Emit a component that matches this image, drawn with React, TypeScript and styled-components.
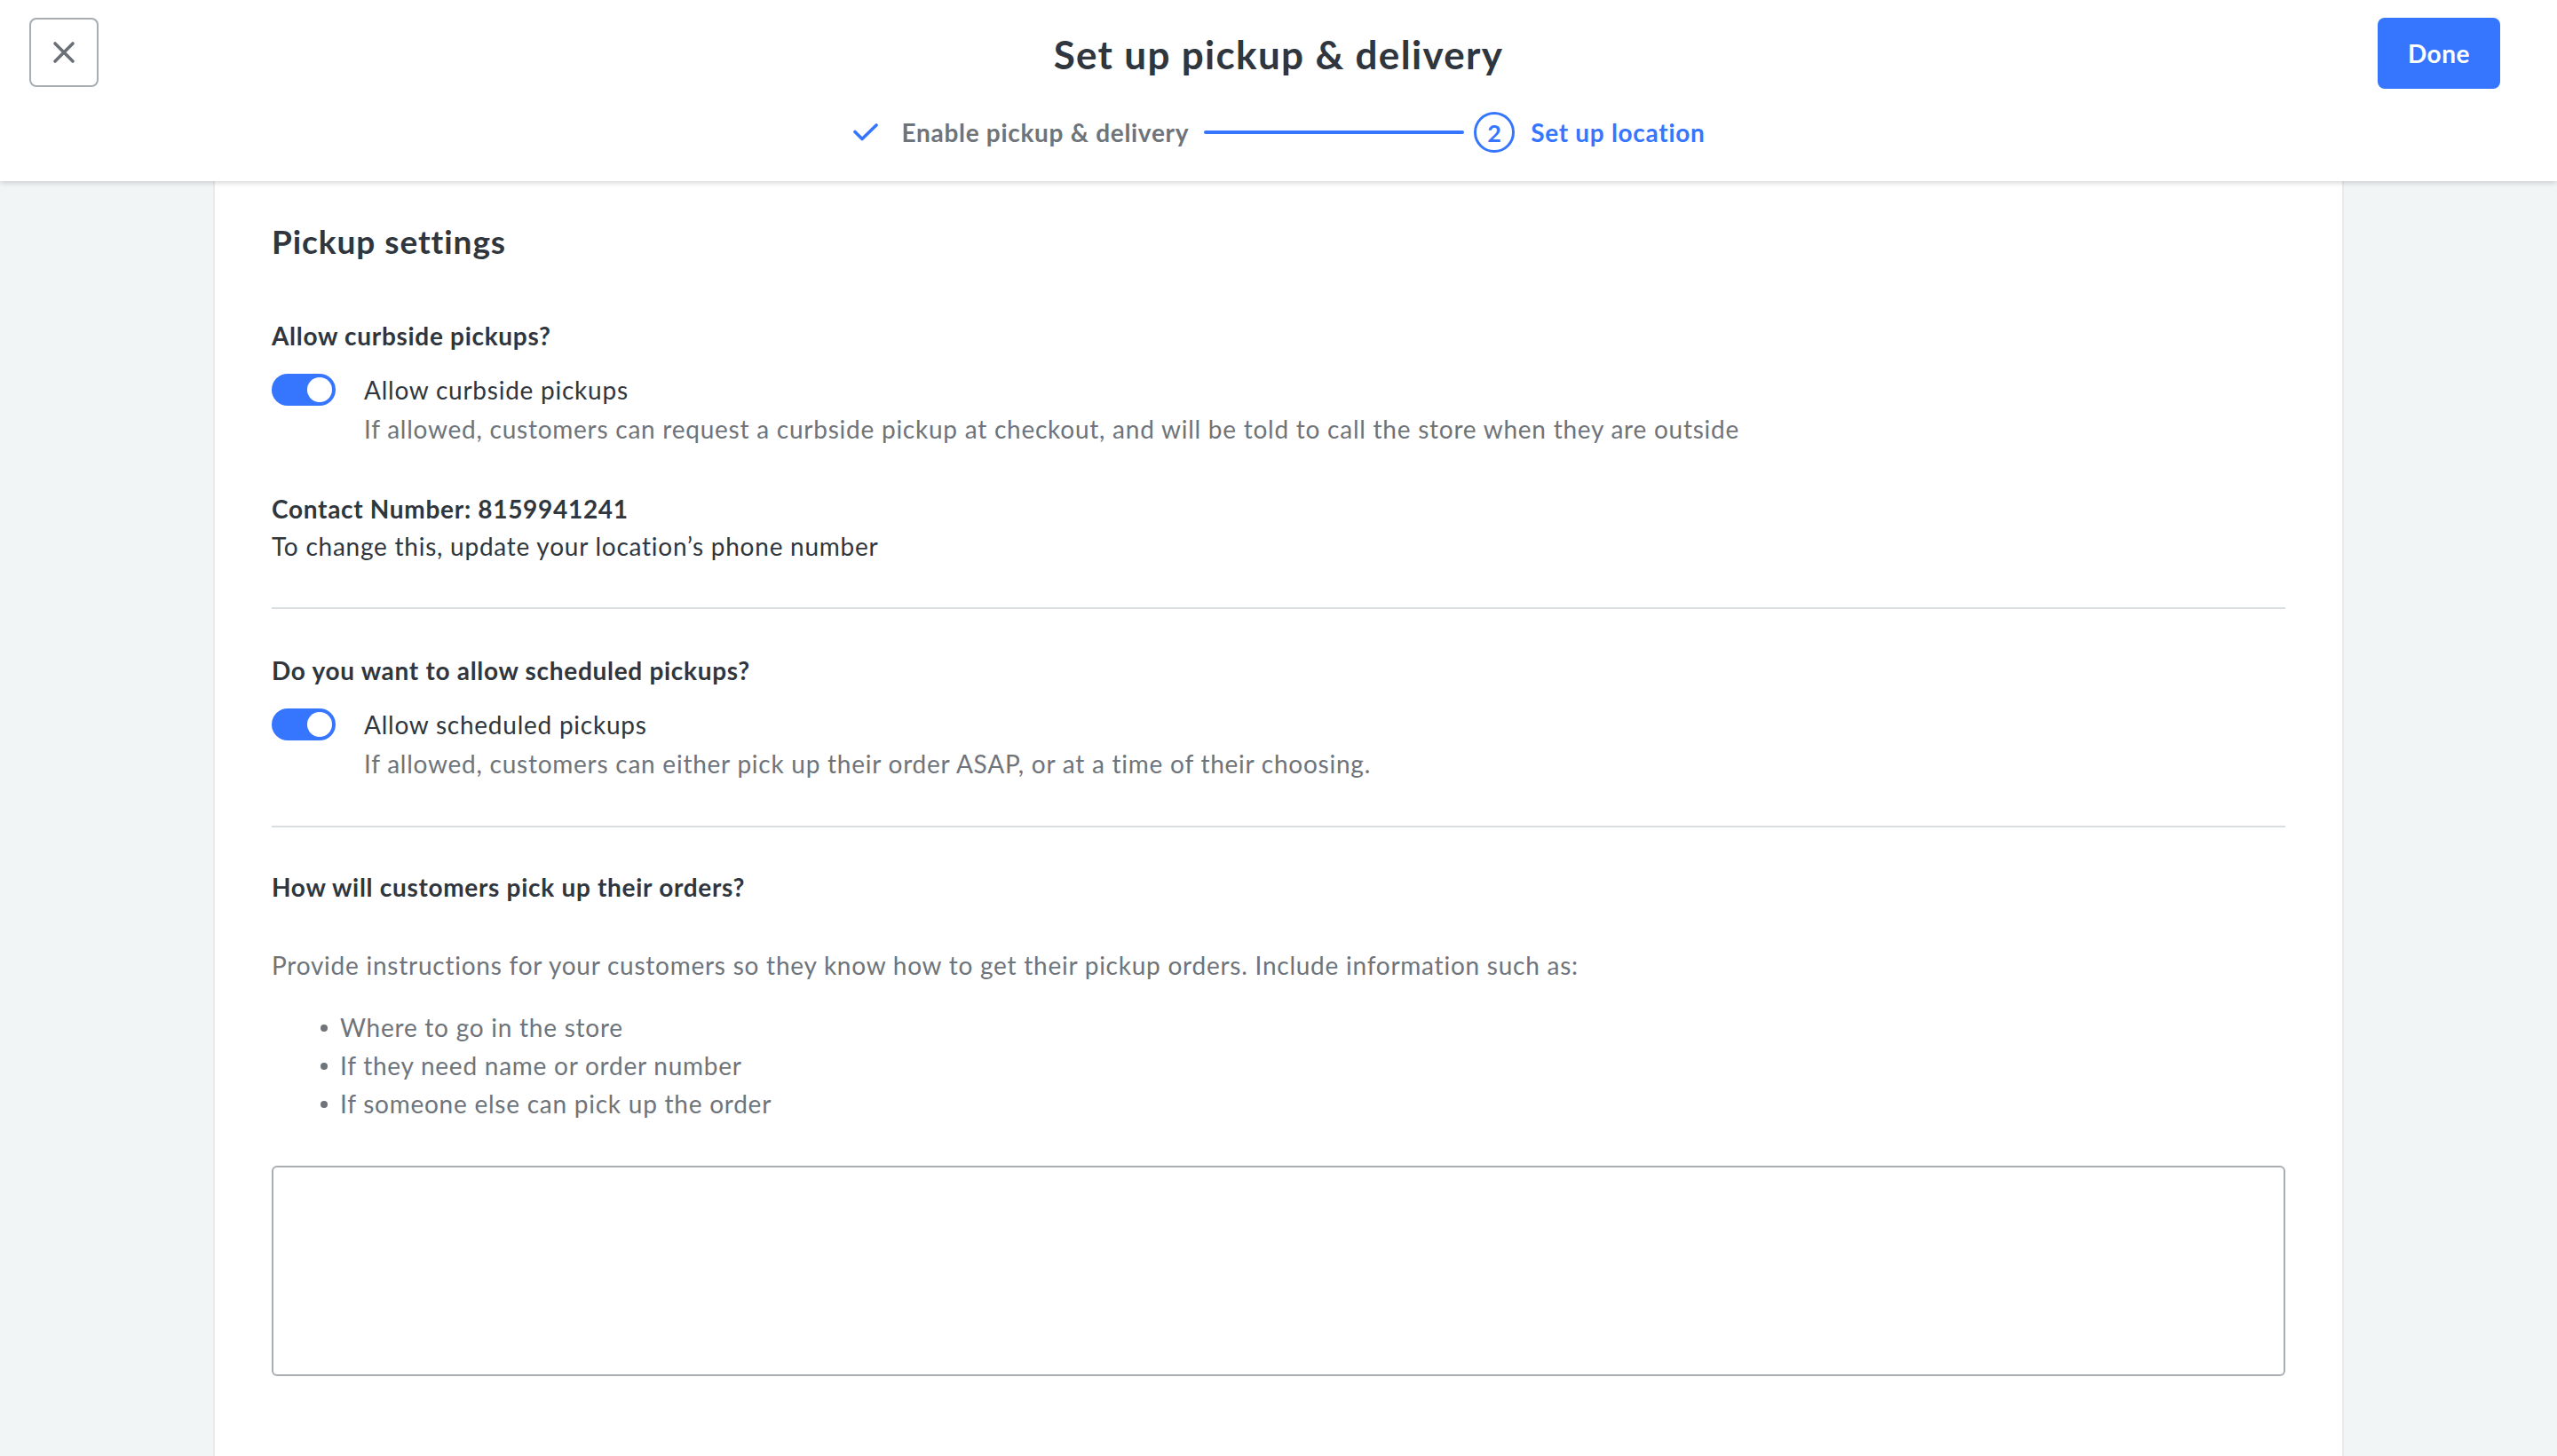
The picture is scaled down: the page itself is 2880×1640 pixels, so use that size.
import React from 'react';
import styled, { createGlobalStyle } from 'styled-components';

const BLUE = '#3676ff';
const DARK = '#2f363d';
const GRAY = '#6e747a';
const FONT = 'Lato, "Liberation Sans", sans-serif';

const GlobalStyle = createGlobalStyle`
  html, body {
    margin: 0;
    padding: 0;
    background: #f2f5f6;
  }
  body {
    font-family: ${FONT};
    color: ${DARK};
  }
  * {
    box-sizing: border-box;
  }
`;

const Page = styled.div`
  min-height: 100vh;
  display: flex;
  flex-direction: column;
  background: #f2f5f6;
`;

const Header = styled.header`
  position: relative;
  z-index: 2;
  height: 204px;
  display: grid;
  grid-template-columns: 1fr auto 1fr;
  align-items: start;
  padding: 20px 33px 0;
  background: #fff;
  box-shadow: 0 2px 6px rgba(0, 0, 0, 0.16);
`;

const CloseButton = styled.button`
  justify-self: start;
  width: 78px;
  height: 78px;
  display: flex;
  align-items: center;
  justify-content: center;
  border: 2px solid #a8adb2;
  border-radius: 8px;
  background: #fff;
  padding: 0;
  cursor: pointer;
`;

const DoneButton = styled.button`
  justify-self: end;
  width: 138px;
  height: 80px;
  margin-right: 31px;
  border: none;
  border-radius: 8px;
  background: ${BLUE};
  color: #fff;
  font-family: ${FONT};
  font-size: 28px;
  font-weight: 700;
  letter-spacing: 0.02em;
  cursor: pointer;
`;

const HeaderCenter = styled.div`
  display: flex;
  flex-direction: column;
  align-items: center;
  padding-top: 13px;
  gap: 37px;
`;

const Title = styled.h1`
  margin: 0;
  font-size: 44px;
  line-height: 56px;
  font-weight: 700;
  letter-spacing: 0.03em;
  color: ${DARK};
`;

const Stepper = styled.div`
  display: flex;
  align-items: center;
  height: 46px;
`;

const StepLabel = styled.span<{ $active?: boolean }>`
  font-size: 28px;
  font-weight: 700;
  letter-spacing: 0.025em;
  color: ${({ $active }) => ($active ? BLUE : GRAY)};
`;

const StepLine = styled.div`
  width: 293px;
  height: 4px;
  border-radius: 2px;
  background: ${BLUE};
  margin: 0 11px 0 17px;
`;

const StepCircle = styled.div`
  width: 46px;
  height: 46px;
  border-radius: 50%;
  border: 3px solid ${BLUE};
  display: flex;
  align-items: center;
  justify-content: center;
  color: ${BLUE};
  font-size: 27px;
  font-weight: 700;
  margin-right: 18px;
`;

const CheckIcon = styled.svg`
  width: 30px;
  height: 20px;
  margin-right: 26px;
`;

const Card = styled.main`
  flex: 1;
  width: 2400px;
  margin: 0 auto;
  background: #fff;
  border-left: 2px solid #e8ebed;
  border-right: 2px solid #e8ebed;
  padding: 44px 64px 80px;
`;

const SectionTitle = styled.h2`
  margin: 0;
  font-size: 37px;
  line-height: 48px;
  font-weight: 700;
  letter-spacing: 0.025em;
  color: ${DARK};
`;

const Question = styled.h3<{ $top: number }>`
  margin: ${({ $top }) => $top}px 0 0;
  font-size: 28px;
  line-height: 42px;
  font-weight: 700;
  letter-spacing: 0.025em;
  color: ${DARK};
`;

const ToggleRow = styled.div`
  display: grid;
  grid-template-columns: 72px 1fr;
  column-gap: 32px;
  margin-top: 18px;
`;

const Track = styled.div`
  grid-row: 1;
  align-self: center;
  width: 72px;
  height: 36px;
  border-radius: 18px;
  background: ${BLUE};
  padding: 4px;
  display: flex;
  justify-content: flex-end;
`;

const Knob = styled.div`
  width: 28px;
  height: 28px;
  border-radius: 50%;
  background: #fff;
`;

const ToggleLabel = styled.div`
  grid-column: 2;
  font-size: 28px;
  line-height: 44px;
  letter-spacing: 0.027em;
  color: ${DARK};
`;

const Help = styled.div`
  grid-column: 2;
  font-size: 28px;
  line-height: 44px;
  letter-spacing: 0.027em;
  color: ${GRAY};
`;

const Text = styled.p<{ $muted?: boolean; $top?: number }>`
  margin: ${({ $top }) => $top ?? 0}px 0 0;
  font-size: 28px;
  line-height: 42px;
  letter-spacing: 0.027em;
  color: ${({ $muted }) => ($muted ? GRAY : DARK)};
`;

const Divider = styled.hr`
  border: none;
  height: 2px;
  background: #d8dde0;
  margin: 48px 0 0;
`;

const Bullets = styled.ul`
  list-style: none;
  margin: 28px 0 0;
  padding: 0 0 0 55px;
`;

const Bullet = styled.li`
  display: flex;
  align-items: center;
  font-size: 28px;
  line-height: 43px;
  letter-spacing: 0.027em;
  color: ${GRAY};

  &::before {
    content: '';
    width: 8px;
    height: 8px;
    border-radius: 50%;
    background: ${GRAY};
    margin-right: 14px;
    flex-shrink: 0;
  }
`;

const Instructions = styled.textarea`
  display: block;
  width: 100%;
  height: 237px;
  margin-top: 48px;
  border: 2px solid #a9aeb3;
  border-radius: 6px;
  resize: none;
  padding: 20px 24px;
  font-family: ${FONT};
  font-size: 28px;
  color: ${DARK};
  outline: none;
`;

function Toggle({ label, help }: { label: string; help: string }) {
  return (
    <ToggleRow>
      <Track>
        <Knob />
      </Track>
      <ToggleLabel>{label}</ToggleLabel>
      <Help>{help}</Help>
    </ToggleRow>
  );
}

export default function App() {
  return (
    <Page>
      <GlobalStyle />
      <Header>
        <CloseButton aria-label="Close">
          <svg width="26" height="26" viewBox="0 0 26 26">
            <path d="M3 3 L23 23 M23 3 L3 23" stroke="#6b7076" strokeWidth="3.6" strokeLinecap="round" />
          </svg>
        </CloseButton>
        <HeaderCenter>
          <Title>Set up pickup &amp; delivery</Title>
          <Stepper>
            <CheckIcon viewBox="0 0 30 20">
              <path d="M3 9.5 L11 17.5 L27 2" fill="none" stroke={BLUE} strokeWidth="3.6" strokeLinecap="round" strokeLinejoin="round" />
            </CheckIcon>
            <StepLabel>Enable pickup &amp; delivery</StepLabel>
            <StepLine />
            <StepCircle>2</StepCircle>
            <StepLabel $active>Set up location</StepLabel>
          </Stepper>
        </HeaderCenter>
        <DoneButton>Done</DoneButton>
      </Header>

      <Card>
        <SectionTitle>Pickup settings</SectionTitle>

        <Question $top={61}>Allow curbside pickups?</Question>
        <Toggle
          label="Allow curbside pickups"
          help="If allowed, customers can request a curbside pickup at checkout, and will be told to call the store when they are outside"
        />

        <Question $top={47}>Contact Number: 8159941241</Question>
        <Text>To change this, update your location’s phone number</Text>

        <Divider />

        <Question $top={48}>Do you want to allow scheduled pickups?</Question>
        <Toggle
          label="Allow scheduled pickups"
          help="If allowed, customers can either pick up their order ASAP, or at a time of their choosing."
        />

        <Divider />

        <Question $top={46}>How will customers pick up their orders?</Question>
        <Text $muted $top={46}>
          Provide instructions for your customers so they know how to get their pickup orders. Include information such as:
        </Text>
        <Bullets>
          <Bullet>Where to go in the store</Bullet>
          <Bullet>If they need name or order number</Bullet>
          <Bullet>If someone else can pick up the order</Bullet>
        </Bullets>

        <Instructions />
      </Card>
    </Page>
  );
}
